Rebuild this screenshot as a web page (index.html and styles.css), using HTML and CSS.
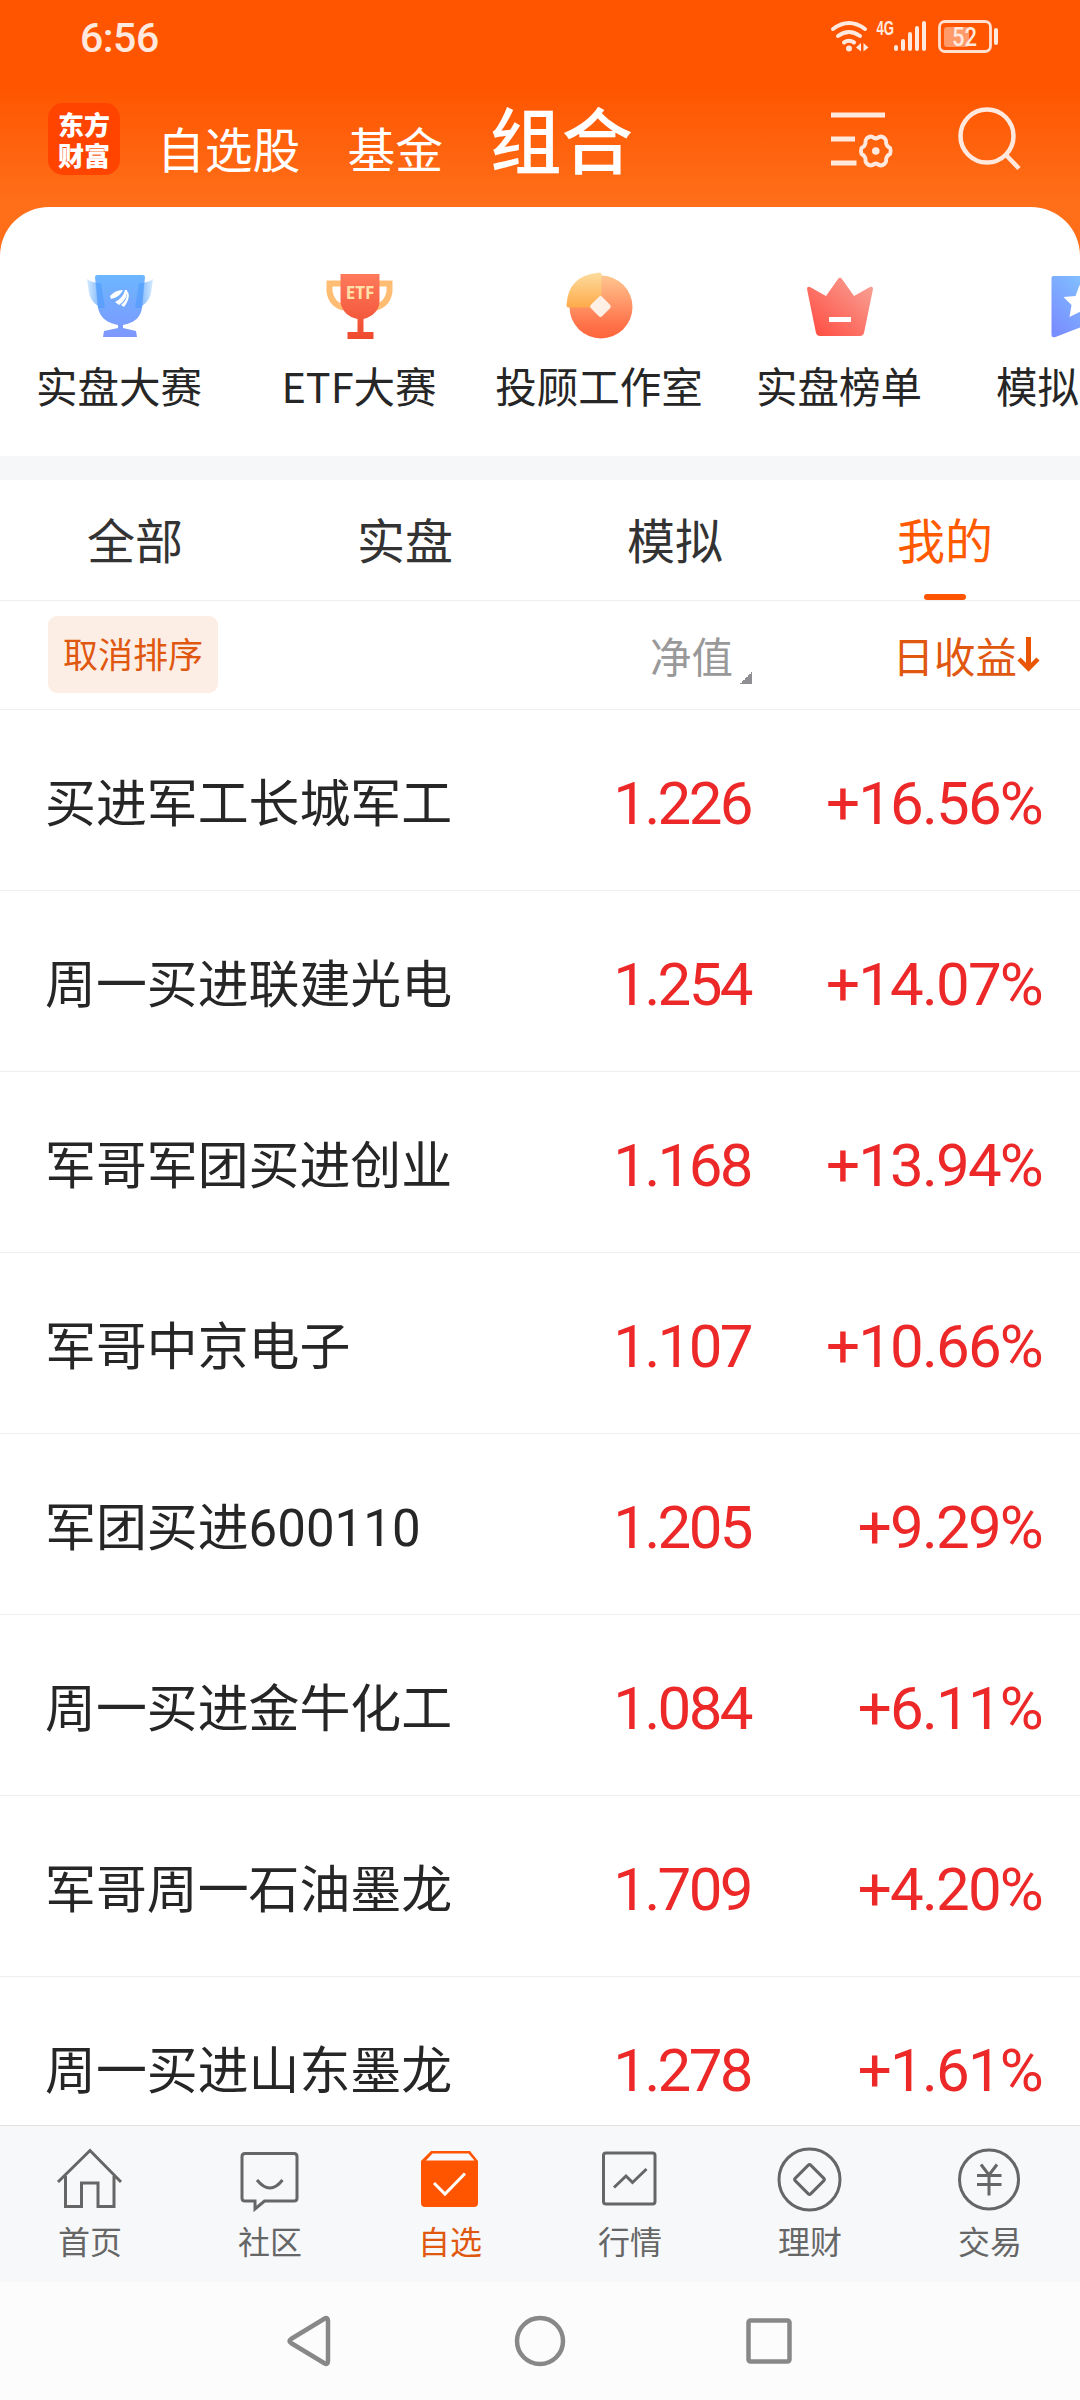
FILE: index.html
```
<!DOCTYPE html>
<html lang="zh-CN">
<head>
<meta charset="utf-8">
<title>组合</title>
<link rel="stylesheet" href="styles.css">
</head>
<body>
<div class="page">

<header class="header">
  <div class="status">
    <span class="time">6:56</span>
    <svg class="status-icons" width="180" height="50" viewBox="826 10 180 50">
      <g fill="none" stroke="#ffe9de" stroke-width="4" stroke-linecap="round">
        <path d="M833 29Q849 17 865 29M838 36Q849 28 860 36M844 42.500Q849 39 854 42.500"/>
      </g>
      <circle cx="849" cy="48.500" r="3" fill="#ffe9de"/>
      <path d="M856 47.500l5-4.500v8.500zM868.500 47.500l-5-4.500v8.500z" fill="#ffe9de"/>
      <text class="net" x="876.500" y="34.500" textLength="17.500" lengthAdjust="spacingAndGlyphs">4G</text>
      <path d="M896 47v2M903 41v8M910 34v15M917 28v21M924 23v26" stroke="#ffe9de" stroke-width="4" stroke-linecap="round"/>
      <rect x="944" y="27" width="25" height="20" rx="3" fill="#ff9a6b"/>
      <rect x="939.500" y="21.500" width="51" height="30" rx="5.500" fill="none" stroke="#ffe0d0" stroke-width="2.800"/>
      <rect x="994" y="28" width="4" height="17" rx="2" fill="#ffe9de"/>
      <text class="battery" x="964.500" y="45.500" text-anchor="middle" textLength="25" lengthAdjust="spacingAndGlyphs">52</text>
    </svg>
  </div>
  <div class="titlebar">
    <div class="logo"><span>东方</span><span>财富</span></div>
    <nav class="titles">
      <span class="title">自选股</span>
      <span class="title">基金</span>
      <span class="title on">组合</span>
    </nav>
    <svg class="tool list" width="66" height="64" viewBox="830 108 66 64" fill="none" stroke="#ffe9de">
      <path d="M831 115h54M831 139h24M831 163h25.500" stroke-width="5"/>
      <path transform="translate(875.800 151) scale(.91 .97) translate(-875.800 -151)" d="M872 136.500q3.800 3 7.600 0q3-1 6 1.500q2 2 1.500 5q1 3.500 4.500 5q1 3 0 6q-3.500 1.500-4.500 5q.5 3-1.500 5q-3 2.500-6 1.500q-3.800-3-7.600 0q-3 1-6-1.500q-2-2-1.500-5q-1-3.500-4.500-5q-1-3 0-6q3.500-1.500 4.500-5q-.5-3 1.500-5q3-2.500 6-1.500z" stroke-width="4.200" stroke-linejoin="round"/>
      <circle cx="875.800" cy="151" r="3.800" fill="#ffe9de" stroke="none"/>
    </svg>
    <svg class="tool" width="66" height="68" viewBox="956 104 66 68" fill="none" stroke="#ffe9de">
      <circle cx="987" cy="136" r="26.500" stroke-width="4.500"/>
      <path d="M1006 155l13 13.500" stroke-width="4.500"/>
    </svg>
  </div>
</header>

<section class="shortcuts">
  <a class="shortcut">
    <svg width="72" height="72" viewBox="84 270 72 72">
      <defs>
        <linearGradient id="blue" x1="0" y1="0" x2="0" y2="1"><stop offset="0" stop-color="#6cb6ff"/><stop offset="1" stop-color="#7d97ff"/></linearGradient>
        <linearGradient id="wingl"><stop offset="0" stop-color="#d6ebff"/><stop offset="1" stop-color="#5aa3fb"/></linearGradient>
        <linearGradient id="wingr"><stop offset="0" stop-color="#5aa3fb"/><stop offset="1" stop-color="#d6ebff"/></linearGradient>
      </defs>
      <path d="M87 279q5 4 14 4l4 25q-13-2-16-15z" fill="url(#wingl)"/>
      <path d="M153 279q-5 4-14 4l-4 25q13-2 16-15z" fill="url(#wingr)"/>
      <path d="M97 275h46q2 0 2 2l-3 31q-2 14-19 17v3l13 3 1 6h-34l1-6 14-3v-3q-17-3-20-17l-3-31q0-2 2-2z" fill="url(#blue)"/>
      <path d="M96 283h5l4 25h-7zM144 283h-5l-4 25h7z" fill="#4c9bfb" opacity=".6"/>
      <path d="M110 296q5-6 13-6q-3 7-12 9zM115 302q8-4 10-12h2q1 9-8 15zM121 305q7-5 6-14q3 3 1 9q-2 5-4 7z" fill="#fff"/>
    </svg>
    <span>实盘大赛</span>
  </a>
  <a class="shortcut">
    <svg width="72" height="72" viewBox="324.500 270 72 72">
      <defs>
        <linearGradient id="red" x1="0" y1="0" x2="0" y2="1"><stop offset="0" stop-color="#ff7a5c"/><stop offset="1" stop-color="#ef4a2e"/></linearGradient>
      </defs>
      <path d="M342 283.500h-12v8q2 13 14 16M378 283.500h12v8q-2 13-14 16" fill="none" stroke="#ffbd74" stroke-width="6"/>
      <path d="M341 274h39v29q-2 12-16 16v13h10v7h-26v-7h10v-13q-14-3-17-16z" fill="url(#red)"/>
      <text class="etf" x="360.500" y="298.500" text-anchor="middle">ETF</text>
    </svg>
    <span>ETF大赛</span>
  </a>
  <a class="shortcut">
    <svg width="72" height="72" viewBox="564.500 270.500 72 72">
      <defs>
        <linearGradient id="coin" x1="0" y1="0" x2="0" y2="1"><stop offset="0" stop-color="#ffc690"/><stop offset=".8" stop-color="#ff7048"/><stop offset="1" stop-color="#ff663c"/></linearGradient>
        <linearGradient id="slice" x1="0" y1="0" x2="0" y2="1"><stop offset="0" stop-color="#fcdc9e"/><stop offset="1" stop-color="#ffaa49"/></linearGradient>
      </defs>
      <circle cx="601.500" cy="307.500" r="31.500" fill="url(#coin)"/>
      <path d="M600 273q2 0 2 2v33h-33q-2 0-2-2q1-30 33-33z" fill="url(#slice)"/>
      <rect x="593" y="299" width="16" height="16" rx="2.500" fill="#fff0e6" transform="rotate(45 601 307)"/>
    </svg>
    <span>投顾工作室</span>
  </a>
  <a class="shortcut">
    <svg width="72" height="72" viewBox="804 270 72 72">
      <defs>
        <linearGradient id="crown" x1="0" y1="1" x2="1" y2="0"><stop offset="0.100" stop-color="#ff5145"/><stop offset="1" stop-color="#f8a79b"/></linearGradient>
      </defs>
      <path d="M810 287l16 9 12-17q2-3 4 0l12 17 16-9q3-1 3 2l-9 44q-1 3-4 3h-40q-3 0-4-3l-9-44q0-3 3-2z" fill="url(#crown)"/>
      <path d="M829 317h22v5h-22z" fill="#fff"/>
    </svg>
    <span>实盘榜单</span>
  </a>
  <a class="shortcut">
    <svg width="72" height="72" viewBox="1045.500 270 72 72">
      <defs>
        <linearGradient id="flag" x1="0" y1="1" x2="1" y2="0"><stop offset="0.100" stop-color="#7a8fff"/><stop offset=".7" stop-color="#80bcff"/></linearGradient>
      </defs>
      <path d="M1055 276h54q2 0 2 2v58l-28-9-26 10q-4 1-4-2v-57q0-2 2-2z" fill="url(#flag)"/>
      <path d="M1081 285l5 12 13 1-10 8 3 13-11-7-10 5 2-12-8-8 12-1z" fill="#fff"/>
    </svg>
    <span>模拟大赛</span>
  </a>
</section>

<nav class="tabs">
  <a class="tab">全部</a>
  <a class="tab">实盘</a>
  <a class="tab">模拟</a>
  <a class="tab on">我的</a>
</nav>

<div class="sortbar">
  <button class="reset">取消排序</button>
  <span class="sort">净值<i class="corner"></i></span>
  <span class="sort on">日收益<svg width="24" height="40" viewBox="0 0 24 40" fill="none" stroke="#ea5504"><path d="M12.500 2v30" stroke-width="5"/><path d="M3 24l9.500 9.500L22 24" stroke-width="4.500"/></svg></span>
</div>

<main class="rows">
  <div class="row"><span class="name">买进军工长城军工</span><span class="num value">1.226</span><span class="num">+16.56%</span></div>
  <div class="row"><span class="name">周一买进联建光电</span><span class="num value">1.254</span><span class="num">+14.07%</span></div>
  <div class="row"><span class="name">军哥军团买进创业</span><span class="num value">1.168</span><span class="num">+13.94%</span></div>
  <div class="row"><span class="name">军哥中京电子</span><span class="num value">1.107</span><span class="num">+10.66%</span></div>
  <div class="row"><span class="name">军团买进<span class="digits">600110</span></span><span class="num value">1.205</span><span class="num">+9.29%</span></div>
  <div class="row"><span class="name">周一买进金牛化工</span><span class="num value">1.084</span><span class="num">+6.11%</span></div>
  <div class="row"><span class="name">军哥周一石油墨龙</span><span class="num value">1.709</span><span class="num">+4.20%</span></div>
  <div class="row"><span class="name">周一买进山东墨龙</span><span class="num value">1.278</span><span class="num">+1.61%</span></div>
</main>

<nav class="tabbar">
  <a class="item">
    <svg width="72" height="72" viewBox="54 2143 72 72"><path d="M58 2183l32-31.500 31 31.500M65.500 2177v30.500h16v-23.500h16.500v23.500h16v-30.500"/></svg>
    <span>首页</span>
  </a>
  <a class="item">
    <svg width="72" height="72" viewBox="234 2142 72 72"><path d="M245 2153.500h49q3 0 3 3v41.500q0 3-3 3h-29.500l-9.500 8v-8h-10q-3 0-3-3v-41.500q0-3 3-3zM257 2180q13 16 25.500 0"/></svg>
    <span>社区</span>
  </a>
  <a class="item on">
    <svg width="72" height="72" viewBox="414 2142 72 72"><path d="M431 2151h39l8 10v42q0 4-4 4h-49q-4 0-4-4v-42z" fill="#ff5500" stroke="none"/><path d="M432.500 2153.500h36l6 7h-48.500z" fill="#f7f8fa" stroke="none"/><path d="M434 2183l11 11 20-20.500" stroke="#fff"/></svg>
    <span>自选</span>
  </a>
  <a class="item">
    <svg width="72" height="72" viewBox="594 2142 72 72"><rect x="603.500" y="2153" width="51.500" height="51" rx="2.500"/><path d="M614 2187.500l12-11.500 6.500 6.500 14-13.500"/></svg>
    <span>行情</span>
  </a>
  <a class="item">
    <svg width="72" height="72" viewBox="774 2142 72 72"><circle cx="809.500" cy="2179.500" r="30.500"/><rect x="798.500" y="2168.500" width="22" height="22" rx="2" transform="rotate(45 809.500 2179.500)"/></svg>
    <span>理财</span>
  </a>
  <a class="item">
    <svg width="72" height="72" viewBox="954 2142 72 72"><circle cx="989" cy="2179.500" r="29.500"/><path d="M981 2164.500l8 10.500 8-10.500M977 2175.500h24.500M977 2184.500h24.500M989 2175v20.500"/></svg>
    <span>交易</span>
  </a>
</nav>

<footer class="sysnav">
  <svg width="540" height="60" viewBox="270 2311 540 60" fill="none" stroke="#888" stroke-width="4.500">
    <path d="M324 2319q4-2.500 4 2v40q0 4.500-4 2l-33-20q-3-2 0-4z"/>
    <circle cx="540" cy="2341" r="23"/>
    <rect x="748.500" y="2320.500" width="41" height="41" rx="2"/>
  </svg>
</footer>

</div>
</body>
</html>
```
FILE: styles.css
```
html, body { margin: 0; padding: 0; }
body { background: #fff; color: #262626; font-family: "Noto Sans CJK SC", sans-serif; }
svg { display: block; flex: none; }

.page { display: flex; flex-direction: column; width: 1080px; height: 2400px; overflow: hidden; }

/* header */
.header { flex: none; height: 260px; background: linear-gradient(#ff5500 0, #ff5500 85px, #ff6f1a 205px); }
.status { display: flex; justify-content: space-between; height: 92px; padding: 10px 74px 0 80px; box-sizing: border-box; }
.time { font: 500 41px/57px Roboto, sans-serif; color: #ffe9de; letter-spacing: -.5px; }
.net { font: 700 20px "Liberation Sans", sans-serif; fill: #ffe9de; }
.battery { font: 500 26px Roboto, sans-serif; fill: #ffe9de; }
.titlebar { display: flex; height: 115px; padding: 0 58px 0 48px; }
.logo { width: 72px; height: 62px; margin-top: 11px; padding: 5px 0; border-radius: 15px; background: #ff4400; color: #fff; font-size: 26px; font-weight: 900; line-height: 31px; text-align: center; }
.logo span { display: block; height: 31px; }
.titles { display: flex; align-items: baseline; flex: 1; margin-left: 37px; color: #fff; }
.title { margin-right: 47px; font-size: 47.800px; line-height: 90px; }
.title.on { margin-right: 0; font-size: 71.500px; font-weight: 500; }
.tool { margin-top: 12px; }
.tool.list { margin: 16px 60px 0 0; }

/* shortcuts */
.shortcuts { display: flex; flex: none; height: 249px; margin-top: -53px; border-bottom: 24px solid #f6f7f9; border-radius: 49px 49px 0 0; background: #fff; overflow: hidden; }
.shortcut { display: flex; flex: none; flex-direction: column; align-items: center; width: 240px; padding-top: 63px; font-size: 41.500px; line-height: 60px; white-space: nowrap; }
.shortcut span { margin: 13px 2px 0 0; }
.etf { font: 700 17px "Noto Sans", sans-serif; fill: #ffe0a8; }

/* tabs */
.tabs { display: flex; flex: none; height: 120px; border-bottom: 1px solid #eee; }
.tab { display: flex; flex: 1; flex-direction: column; align-items: center; font-size: 48px; line-height: 117px; color: #333; }
.tab.on { color: #ff5a00; }
.tab.on::after { content: ""; width: 42px; height: 6px; margin-top: -3px; border-radius: 3px; background: #ff5500; }

.sortbar { display: grid; grid-template-columns: 400px 304px 288px; flex: none; align-items: center; height: 107px; padding: 0 40px 1px 48px; border-bottom: 1px solid #eee; }
.reset { width: 170px; height: 77px; margin-bottom: 1px; padding: 0 0 3px; border: 0; border-radius: 9px; background: #fdeee5; color: #e0580f; font: 35px "Noto Sans CJK SC", sans-serif; }
.sort { display: flex; justify-content: flex-end; align-items: center; font-size: 41.500px; line-height: 60px; color: #999; }
.sort.on { color: #e0580f; }
.corner { width: 12px; height: 12px; margin: 46px 0 0 7px; background: linear-gradient(135deg, transparent 50%, #8e8e93 50%); }
.sort svg { margin-left: -1px; }

/* list */
.rows { flex: none; height: 1415px; overflow: hidden; }
.row { display: grid; grid-template-columns: 401px 304px 289px; align-items: center; height: 180px; padding: 0 40px 0 45px; border-bottom: 1px solid #eee; }
.name { font-size: 50.900px; white-space: nowrap; }
.digits { font: 51px/1 Roboto, sans-serif; }
.num { padding-top: 6px; margin-right: -3px; font: 60px Roboto, sans-serif; letter-spacing: -1.800px; color: #ec2828; text-align: right; }
.value { margin-right: -1px; letter-spacing: -2.600px; }

/* bottom bars */
.tabbar { display: flex; flex: none; height: 156px; border-top: 1px solid #e2e2e4; background: #f7f8fa; }
.item { display: flex; flex: 1; flex-direction: column; align-items: center; padding-top: 16px; font-size: 32px; line-height: 48px; color: #666; }
.item svg { fill: none; stroke: #666; stroke-width: 3; }
.item span { margin-top: 2px; }
.item.on { color: #e0580f; }
.sysnav { display: flex; flex: 1; justify-content: center; align-items: center; background: #fcfcfc; }
```
